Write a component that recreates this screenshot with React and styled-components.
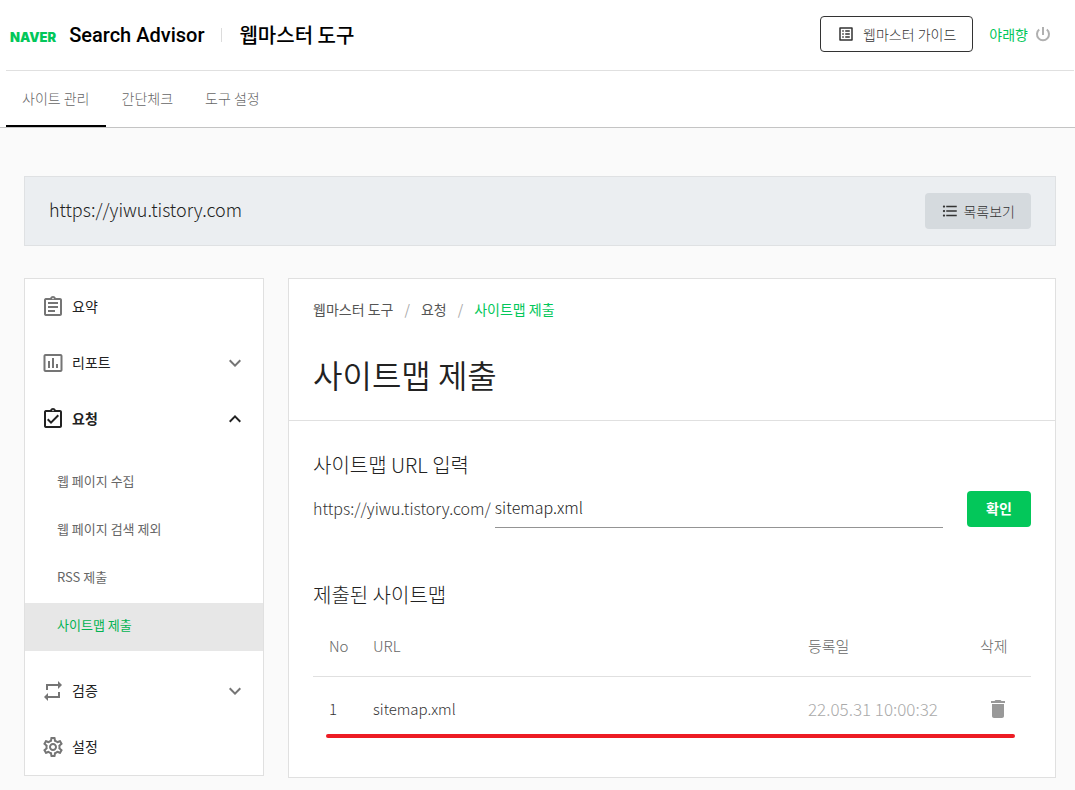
import React, { useState } from "react";
import styled, { createGlobalStyle } from "styled-components";
import {
  MdOutlineAssignment,
  MdInsertChartOutlined,
  MdOutlineAssignmentTurnedIn,
  MdRepeat,
  MdOutlineSettings,
  MdExpandMore,
  MdExpandLess,
  MdListAlt,
  MdFormatListBulleted,
  MdDelete,
} from "react-icons/md";

const GlobalStyle = createGlobalStyle`
  *, *::before, *::after { box-sizing: border-box; }
  body {
    margin: 0;
    background: #fff;
    color: #222;
    font-family: "Noto Sans CJK KR", sans-serif;
    font-weight: 300;
    font-size: 14px;
    line-height: 24px;
  }
  button, input { font: inherit; color: inherit; }
  button { cursor: pointer; }
  a { color: inherit; text-decoration: none; }
  h1, h2, p, ul, ol { margin: 0; padding: 0; font-weight: inherit; }
  ul, ol { list-style: none; }
  svg { flex: none; }
`;

const Page = styled.div`
  display: flex;
  flex-direction: column;
  min-height: 100vh;
`;

const Header = styled.header`
  display: flex;
  align-items: center;
  justify-content: space-between;
  height: 71px;
  margin: 0 1px 0 6px;
  padding: 0 22px 2px 4px;
  border-bottom: 1px solid #e0e0e0;
`;

const Brand = styled.div`
  display: flex;
  align-items: center;
  padding-top: 2px;
  color: #000;
  font-size: 20px;
  font-weight: 500;
`;

const Logo = styled.a`
  margin-right: 13px;
  padding-top: 3px;
  color: #03c75a;
  font-family: Inter, sans-serif;
  font-size: 13px;
  font-weight: 900;
  line-height: 16px;
`;

const ProductName = styled.a`
  font-family: Roboto, sans-serif;
`;

const BrandDivider = styled.span`
  width: 1px;
  height: 14px;
  margin: 0 17px;
  background: #dcdcdc;
`;

const Account = styled.div`
  display: flex;
  align-items: center;
  gap: 16px;
`;

const GuideButton = styled.button`
  display: flex;
  align-items: center;
  gap: 8px;
  height: 36px;
  padding: 0 16px;
  border: 1px solid #333;
  border-radius: 4px;
  background: #fff;
  color: #333;
`;

const User = styled.div`
  display: flex;
  align-items: center;
  gap: 6px;
  color: #03c75a;
  font-weight: 400;
`;

const IconButton = styled.button`
  display: flex;
  margin: 0 auto;
  padding: 0;
  border: 0;
  background: none;
  color: ${(p) => p.$color};
`;

const Tabs = styled.nav`
  display: flex;
  height: 57px;
  padding-left: 6px;
  border-bottom: 1px solid #c4c4c4;
`;

const Tab = styled.a`
  padding: 15px 16px 0;
  border-bottom: 2px solid ${(p) => (p.$active ? "#000" : "transparent")};
  color: #666;
`;

const Main = styled.main`
  flex: 1;
  padding: 48px 19px 12px 24px;
  background: #fafafa;
`;

const SiteBar = styled.section`
  display: flex;
  align-items: center;
  justify-content: space-between;
  height: 70px;
  margin-bottom: 32px;
  padding: 0 24px;
  border: 1px solid #dfe1e3;
  background: #ebeef1;
`;

const SiteUrl = styled.p`
  padding-bottom: 4px;
  font-size: 18px;
`;

const ListButton = styled.button`
  display: flex;
  align-items: center;
  gap: 4px;
  height: 36px;
  padding: 0 16px;
  border: 0;
  border-radius: 4px;
  background: #d5dade;
  color: #333;
`;

const Columns = styled.div`
  display: grid;
  grid-template-columns: 240px 1fr;
  align-items: start;
  gap: 24px;
`;

const Sidebar = styled.nav`
  border: 1px solid #e0e0e0;
  background: #fff;
`;

const MenuItem = styled.button`
  display: flex;
  align-items: center;
  gap: 7px;
  width: 100%;
  height: 56px;
  padding: 0 16px;
  border: 0;
  background: none;
  color: #222;
  font-weight: ${(p) => (p.$open ? 700 : 400)};
  text-align: left;

  svg { color: ${(p) => (p.$open ? "#222" : "#757575")}; }
`;

const MenuLabel = styled.span`
  flex: 1;
  padding-bottom: 3px;
`;

const SubMenu = styled.ul`
  padding: 12px 0;
`;

const SubLink = styled.a`
  display: block;
  padding: 0 32px 4px;
  background: ${(p) => (p.$active ? "#e7e7e7" : "none")};
  color: ${(p) => (p.$active ? "#03b352" : "#666")};
  font-size: 13px;
  font-weight: 400;
  line-height: 44px;
`;

const Content = styled.section`
  border: 1px solid #e0e0e0;
  background: #fff;
`;

const ContentHead = styled.div`
  padding: 18px 24px 22px;
  border-bottom: 1px solid #e0e0e0;
`;

const Crumbs = styled.ol`
  display: flex;
  margin-bottom: 29px;
  color: #555;
  font-weight: 400;
`;

const Crumb = styled.li`
  color: ${(p) => (p.$current ? "#03c75a" : "inherit")};

  &:not(:first-child)::before {
    content: "/";
    margin: 0 11px;
    color: #aaa;
  }
`;

const Title = styled.h1`
  font-size: 32px;
  font-weight: 350;
  line-height: 48px;
`;

const ContentBody = styled.div`
  padding: 28px 24px 36px;
`;

const SectionTitle = styled.h2`
  font-size: 20px;
  line-height: 32px;
`;

const UrlForm = styled.form`
  display: flex;
  align-items: flex-end;
  margin: 10px 0 51px;
`;

const UrlLabel = styled.label`
  padding: 4px 4px 8px 0;
  color: #333;
  font-size: 16px;
`;

const UrlInput = styled.input`
  flex: 1;
  min-width: 0;
  height: 37px;
  margin-right: 24px;
  padding: 0 0 4px;
  border: 0;
  border-bottom: 1px solid #949494;
  outline: 0;
  background: none;
  color: #222;
  font-size: 16px;
`;

const SubmitButton = styled.button`
  align-self: flex-start;
  width: 64px;
  height: 36px;
  padding: 0 0 2px;
  border: 0;
  border-radius: 4px;
  background: #03c75a;
  color: #fff;
  font-weight: 700;
`;

const TableWrap = styled.div`
  position: relative;
  margin-top: 6px;
`;

const Table = styled.table`
  width: 100%;
  border-collapse: collapse;
  table-layout: fixed;
  font-size: 15px;
`;

const Th = styled.th`
  width: ${(p) => p.$width || "auto"};
  height: 59px;
  padding: 0 16px;
  border-bottom: 1px solid #e0e0e0;
  color: #666;
  font-weight: 300;
  text-align: left;
  white-space: nowrap;
`;

const Td = styled.td`
  height: 65px;
  padding: 0 16px;
  color: #333;
  white-space: nowrap;
`;

const DateCell = styled(Td)`
  color: #aaa;
  font-size: 17px;
`;

const RowMark = styled.span`
  position: absolute;
  right: 16px;
  bottom: 3px;
  left: 13px;
  height: 4px;
  border-radius: 2px;
  background: #ed1c24;
`;

const requestLinks = ["웹 페이지 수집", "웹 페이지 검색 제외", "RSS 제출", "사이트맵 제출"];

const menu = [
  { label: "요약", Icon: MdOutlineAssignment },
  { label: "리포트", Icon: MdInsertChartOutlined, expandable: true },
  { label: "요청", Icon: MdOutlineAssignmentTurnedIn, expandable: true, links: requestLinks },
  { label: "검증", Icon: MdRepeat, expandable: true },
  { label: "설정", Icon: MdOutlineSettings },
];

const sitemaps = [{ no: 1, url: "sitemap.xml", date: "22.05.31 10:00:32" }];

function PowerIcon() {
  return (
    <svg width="18" height="18" viewBox="0 0 18 18" fill="none" stroke="currentColor" strokeWidth="2">
      <path d="M9 2v8M5.2 4.6a6 6 0 1 0 7.6 0" />
    </svg>
  );
}

function MenuGroup({ label, Icon, expandable, links }) {
  const open = Boolean(links);
  const Chevron = open ? MdExpandLess : MdExpandMore;
  return (
    <li>
      <MenuItem type="button" $open={open} aria-expanded={expandable ? open : undefined}>
        <Icon size={24} />
        <MenuLabel>{label}</MenuLabel>
        {expandable && <Chevron size={24} />}
      </MenuItem>
      {open && (
        <SubMenu>
          {links.map((link) => (
            <li key={link}>
              <SubLink href="#" $active={link === "사이트맵 제출"}>{link}</SubLink>
            </li>
          ))}
        </SubMenu>
      )}
    </li>
  );
}

export default function App() {
  const [path, setPath] = useState("sitemap.xml");
  return (
    <Page>
      <GlobalStyle />
      <Header>
        <Brand>
          <Logo href="#">NAVER</Logo>
          <ProductName href="#">Search Advisor</ProductName>
          <BrandDivider />
          <a href="#">웹마스터 도구</a>
        </Brand>
        <Account>
          <GuideButton type="button">
            <MdListAlt size={18} />
            웹마스터 가이드
          </GuideButton>
          <User>
            야래향
            <IconButton type="button" aria-label="로그아웃" $color="#b0b0b0">
              <PowerIcon />
            </IconButton>
          </User>
        </Account>
      </Header>
      <Tabs>
        <Tab href="#" $active>사이트 관리</Tab>
        <Tab href="#">간단체크</Tab>
        <Tab href="#">도구 설정</Tab>
      </Tabs>
      <Main>
        <SiteBar>
          <SiteUrl>https://yiwu.tistory.com</SiteUrl>
          <ListButton type="button">
            <MdFormatListBulleted size={18} />
            목록보기
          </ListButton>
        </SiteBar>
        <Columns>
          <Sidebar>
            <ul>
              {menu.map((item) => (
                <MenuGroup key={item.label} {...item} />
              ))}
            </ul>
          </Sidebar>
          <Content>
            <ContentHead>
              <Crumbs>
                <Crumb><a href="#">웹마스터 도구</a></Crumb>
                <Crumb><a href="#">요청</a></Crumb>
                <Crumb $current>사이트맵 제출</Crumb>
              </Crumbs>
              <Title>사이트맵 제출</Title>
            </ContentHead>
            <ContentBody>
              <SectionTitle>사이트맵 URL 입력</SectionTitle>
              <UrlForm onSubmit={(e) => e.preventDefault()}>
                <UrlLabel htmlFor="sitemap-path">https://yiwu.tistory.com/</UrlLabel>
                <UrlInput id="sitemap-path" type="text" value={path} onChange={(e) => setPath(e.target.value)} />
                <SubmitButton type="submit">확인</SubmitButton>
              </UrlForm>
              <SectionTitle>제출된 사이트맵</SectionTitle>
              <TableWrap>
                <Table>
                  <thead>
                    <tr>
                      <Th $width="44px">No</Th>
                      <Th>URL</Th>
                      <Th $width="172px">등록일</Th>
                      <Th $width="67px">삭제</Th>
                    </tr>
                  </thead>
                  <tbody>
                    {sitemaps.map((row) => (
                      <tr key={row.no}>
                        <Td>{row.no}</Td>
                        <Td>{row.url}</Td>
                        <DateCell>{row.date}</DateCell>
                        <Td>
                          <IconButton type="button" aria-label="삭제" $color="#999">
                            <MdDelete size={24} />
                          </IconButton>
                        </Td>
                      </tr>
                    ))}
                  </tbody>
                </Table>
                <RowMark />
              </TableWrap>
            </ContentBody>
          </Content>
        </Columns>
      </Main>
    </Page>
  );
}
